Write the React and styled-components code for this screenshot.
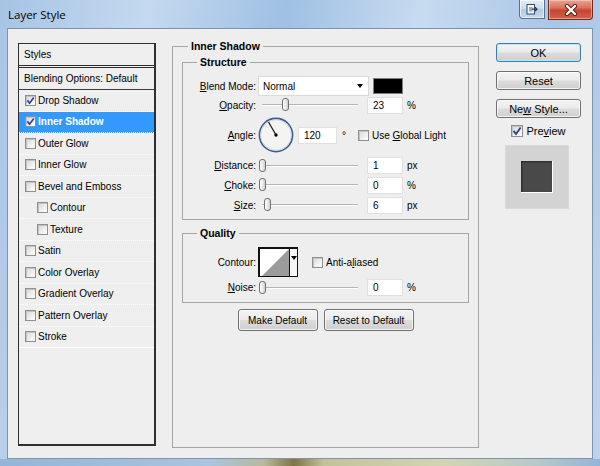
import React from 'react'
import styled, { createGlobalStyle } from 'styled-components'

const GlobalStyle = createGlobalStyle`
  html, body { margin: 0; padding: 0; }
  body {
    width: 600px;
    height: 466px;
    overflow: hidden;
    font-family: "Liberation Sans", Arial, sans-serif;
    font-size: 10px;
    color: #000;
  }
  * { box-sizing: border-box; }
`

const styleItems = [
  { name: 'Drop Shadow', on: true },
  { name: 'Inner Shadow', on: true, active: true },
  { name: 'Outer Glow' },
  { name: 'Inner Glow' },
  { name: 'Bevel and Emboss' },
  { name: 'Contour', sub: true },
  { name: 'Texture', sub: true },
  { name: 'Satin' },
  { name: 'Color Overlay' },
  { name: 'Gradient Overlay' },
  { name: 'Pattern Overlay' },
  { name: 'Stroke' },
]

function Check({ on, size = 11 }) {
  return (
    <CheckBox $size={size}>
      {on && (
        <svg width={size - 2} height={size - 2} viewBox="0 0 9 9">
          <path d="M1.4 4.4 L3.6 7.2 L7.8 1.4" fill="none" stroke="#2d4390" strokeWidth="1.7" />
        </svg>
      )}
    </CheckBox>
  )
}

function Slider({ frac }) {
  return (
    <SliderTrack>
      <Thumb style={{ left: 4 + frac * 96 - 3.5 }} />
    </SliderTrack>
  )
}

function Dial() {
  const a = (120 * Math.PI) / 180
  const x = 18 + Math.cos(a) * 15
  const y = 18 - Math.sin(a) * 15
  return (
    <svg width="36" height="36" viewBox="0 0 36 36">
      <circle cx="18" cy="18" r="16.6" fill="#f4f4f2" stroke="#3e5b8c" strokeWidth="1.6" />
      <circle cx="18" cy="18" r="15.3" fill="none" stroke="#c9d2df" strokeWidth="0.8" />
      <line x1="18" y1="18" x2={x} y2={y} stroke="#1e1e1e" strokeWidth="1.3" />
      <circle cx="18" cy="18" r="1.7" fill="#000" />
    </svg>
  )
}

function App() {
  return (
    <Window>
      <GlobalStyle />
      <TitleBar>
        <Title>Layer Style</Title>
        <CaptionButtons>
          <CaptionButton $w={26}>
            <svg width="12" height="11" viewBox="0 0 12 11">
              <rect x="1" y="0.5" width="7.5" height="9.5" fill="#f4f7fb" stroke="#3b4a5e" />
              <rect x="3" y="3" width="3.5" height="4.5" fill="#9aa9bb" />
              <path d="M6 5.2 H11 M9 3.2 L11 5.2 L9 7.2" fill="none" stroke="#2b3645" strokeWidth="1.2" />
            </svg>
          </CaptionButton>
          <CloseButton>
            <svg width="14" height="12" viewBox="0 0 14 12">
              <path d="M3 2 L11 10 M11 2 L3 10" stroke="#5a1c12" strokeWidth="4.2" strokeLinecap="round" />
              <path d="M3 2 L11 10 M11 2 L3 10" stroke="#ffffff" strokeWidth="2.4" strokeLinecap="round" />
            </svg>
          </CloseButton>
        </CaptionButtons>
      </TitleBar>

      <Client>
        <StyleList>
          <ListHead $h={24} $double>Styles</ListHead>
          <ListHead $h={22}>Blending Options: Default</ListHead>
          {styleItems.map((s) => (
            <StyleItem key={s.name} $sub={s.sub} $active={s.active}>
              <Check on={s.on} />
              <span>{s.name}</span>
            </StyleItem>
          ))}
        </StyleList>

        <MainGroup>
          <Legend $ml={6}>Inner Shadow</Legend>

          <SubGroup $pad="7px 0 4px 0">
            <Legend $ml={14}>Structure</Legend>
            <FieldRow $h={20}>
              <Label><u>B</u>lend Mode:</Label>
              <Select>
                <span>Normal</span>
                <Arrow />
              </Select>
              <Swatch />
            </FieldRow>
            <FieldRow $h={18}>
              <Label><u>O</u>pacity:</Label>
              <Slider frac={0.24} />
              <ValueBox>23</ValueBox>
              <Unit>%</Unit>
            </FieldRow>
            <FieldRow $h={42}>
              <Label><u>A</u>ngle:</Label>
              <Dial />
              <ValueBox $w={39} $ml={4}>120</ValueBox>
              <Unit $ml={5}>°</Unit>
              <CheckLabel $ml={12}>
                <Check />
                <span>Use <u>G</u>lobal Light</span>
              </CheckLabel>
            </FieldRow>
            <FieldRow $h={19}>
              <Label><u>D</u>istance:</Label>
              <Slider frac={0.01} />
              <ValueBox>1</ValueBox>
              <Unit>px</Unit>
            </FieldRow>
            <FieldRow $h={20}>
              <Label><u>C</u>hoke:</Label>
              <Slider frac={0.01} />
              <ValueBox>0</ValueBox>
              <Unit>%</Unit>
            </FieldRow>
            <FieldRow $h={20}>
              <Label><u>S</u>ize:</Label>
              <Slider frac={0.062} />
              <ValueBox>6</ValueBox>
              <Unit>px</Unit>
            </FieldRow>
          </SubGroup>

          <SubGroup $pad="7px 0 4px 0" $mt={6}>
            <Legend $ml={14}>Quality</Legend>
            <FieldRow $h={30}>
              <Label>Contour:</Label>
              <ContourPicker>
                <svg width="29" height="28" viewBox="0 0 29 28">
                  <rect width="29" height="28" fill="#ffffff" />
                  <polygon points="1,28 29,0 29,28" fill="#9b9b9b" />
                </svg>
                <ContourArrow>
                  <Arrow />
                </ContourArrow>
              </ContourPicker>
              <CheckLabel $ml={14}>
                <Check />
                <span>Anti-a<u>l</u>iased</span>
              </CheckLabel>
            </FieldRow>
            <FieldRow $h={21}>
              <Label><u>N</u>oise:</Label>
              <Slider frac={0.005} />
              <ValueBox>0</ValueBox>
              <Unit>%</Unit>
            </FieldRow>
          </SubGroup>

          <ButtonRow>
            <PushButton $w={80} $h={22}><span>Make Default</span></PushButton>
            <PushButton $w={90} $h={22}><span>Reset to Default</span></PushButton>
          </ButtonRow>
        </MainGroup>

        <SideColumn>
          <PushButton $w={85} $h={19} $default><span>OK</span></PushButton>
          <PushButton $w={85} $h={19} $mt={9}><span>Reset</span></PushButton>
          <PushButton $w={85} $h={19} $mt={9}><span>Ne<u>w</u> Style...</span></PushButton>
          <PreviewToggle>
            <Check on size={12} />
            <PreviewText>Pre<u>v</u>iew</PreviewText>
          </PreviewToggle>
          <PreviewBox>
            <PreviewSwatch />
          </PreviewBox>
        </SideColumn>
      </Client>
      <BottomEdge />
    </Window>
  )
}

export default App

const Window = styled.div`
  width: 600px;
  height: 466px;
  display: flex;
  flex-direction: column;
  background: linear-gradient(100deg, #a7c4e4 0%, #c4d9ef 22%, #9fc0e3 42%, #c7dbf0 62%, #a9c6e6 82%, #bdd4ed 100%);
`

const TitleBar = styled.div`
  height: 28px;
  flex: none;
  display: flex;
  align-items: flex-start;
  padding-left: 8px;
`

const Title = styled.div`
  flex: 1;
  font-family: "Open Sans", "Liberation Sans", sans-serif;
  font-size: 11.5px;
  line-height: 28px;
  padding-top: 1px;
  color: #000;
`

const CaptionButtons = styled.div`
  display: flex;
  gap: 3px;
  margin-right: 7px;
`

const CaptionButton = styled.div`
  width: ${(p) => p.$w}px;
  height: 19px;
  display: flex;
  align-items: center;
  justify-content: center;
  border: 1px solid #5b6f88;
  border-top: none;
  border-radius: 0 0 0 4px;
  background: linear-gradient(#e3ecf6 0%, #cfdeee 45%, #b4cbe3 55%, #c6d9ed 100%);
  box-shadow: inset 0 0 0 1px rgba(255, 255, 255, 0.6);
`

const CloseButton = styled.div`
  width: 45px;
  height: 20px;
  display: flex;
  align-items: center;
  justify-content: center;
  border: 1px solid #6e2a20;
  border-top: none;
  border-radius: 0 0 4px 0;
  background: linear-gradient(#e7a595 0%, #d8735f 40%, #c84630 55%, #d1624a 100%);
  box-shadow: inset 0 0 0 1px rgba(255, 220, 210, 0.5);
`

const Client = styled.div`
  margin: 0 7px;
  height: 431px;
  flex: none;
  background: #eeeeee;
  border: 1px solid #7f93ab;
  display: flex;
  align-items: flex-start;
  padding: 10px 0 0 10px;
`

const BottomEdge = styled.div`
  flex: 1;
  background: linear-gradient(90deg, #93b5d9 0%, #a9c4df 35%, #b9b99c 44%, #7f7444 49%, #c3c39a 54%, #d3d5b2 74%, #b5c8c9 90%, #93b5d9 100%);
`

const StyleList = styled.div`
  margin-top: 4px;
  width: 138px;
  height: 403px;
  flex: none;
  display: flex;
  flex-direction: column;
  background: #efefef;
  border: 1px solid #2f2f2f;
  border-right-width: 2px;
  border-bottom-width: 2px;
`

const ListHead = styled.div`
  height: ${(p) => p.$h}px;
  flex: none;
  display: flex;
  align-items: center;
  padding-left: 5px;
  white-space: nowrap;
  border-bottom: ${(p) => (p.$double ? '3px double #2f2f2f' : '1px solid #3a3a3a')};
`

const StyleItem = styled.div`
  height: 21.5px;
  flex: none;
  display: flex;
  align-items: center;
  gap: 2px;
  padding-left: ${(p) => (p.$sub ? 18 : 6)}px;
  white-space: nowrap;
  border-bottom: 1px dotted #ffffff;
  background: ${(p) => (p.$active ? '#3399ff' : 'transparent')};
  color: ${(p) => (p.$active ? '#ffffff' : '#000000')};
  font-weight: ${(p) => (p.$active ? 'bold' : 'normal')};

  &:last-child {
    border-bottom-style: solid;
  }
`

const CheckBox = styled.span`
  flex: none;
  width: ${(p) => p.$size}px;
  height: ${(p) => p.$size}px;
  display: inline-flex;
  align-items: center;
  justify-content: center;
  border: 1px solid #8f8f8f;
  background: linear-gradient(135deg, #d6d6d6 0%, #f2f2f2 65%, #ffffff 100%);
  box-shadow: inset 1px 1px 0 #c4c4c4;
`

const MainGroup = styled.fieldset`
  margin: 0 0 0 16px;
  min-width: 0;
  width: 307px;
  height: 409px;
  flex: none;
  padding: 0 9px;
  border: 1px solid #a5a5a5;
`

const SubGroup = styled.fieldset`
  margin: ${(p) => p.$mt || 2}px 0 0 0;
  min-width: 0;
  padding: ${(p) => p.$pad};
  border: 1px solid #a5a5a5;
`

const Legend = styled.legend`
  margin-left: ${(p) => p.$ml}px;
  padding: 0 3px;
  font-weight: bold;
  font-size: 10.5px;
  line-height: 14px;
`

const FieldRow = styled.div`
  height: ${(p) => p.$h}px;
  display: flex;
  align-items: center;
  white-space: nowrap;
`

const Label = styled.span`
  width: 73px;
  flex: none;
  margin-right: 2px;
  text-align: right;
`

const Select = styled.div`
  width: 111px;
  height: 20px;
  display: flex;
  align-items: center;
  justify-content: space-between;
  padding: 0 5px 0 4px;
  background: #ffffff;
  border: 1px solid #dadada;
`

const Arrow = styled.span`
  width: 0;
  height: 0;
  border-left: 3.5px solid transparent;
  border-right: 3.5px solid transparent;
  border-top: 4px solid #000;
`

const Swatch = styled.div`
  width: 30px;
  height: 16px;
  margin-left: 4px;
  background: #000000;
  border: 1px solid #808080;
`

const SliderTrack = styled.div`
  position: relative;
  width: 104px;
  height: 14px;
  flex: none;

  &::before {
    content: '';
    position: absolute;
    left: 4px;
    right: 4px;
    top: 6px;
    height: 1px;
    background: #b4b4b4;
    box-shadow: 0 1px 0 #ffffff;
  }
`

const Thumb = styled.span`
  position: absolute;
  top: 0;
  width: 7px;
  height: 13px;
  border: 1px solid #707070;
  border-radius: 3px;
  background: linear-gradient(90deg, #ffffff 0%, #e6e6e6 60%, #cfcfcf 100%);
`

const ValueBox = styled.div`
  width: ${(p) => p.$w || 36}px;
  height: 17px;
  flex: none;
  margin-left: ${(p) => (p.$ml === undefined ? 5 : p.$ml)}px;
  padding-left: 5px;
  display: flex;
  align-items: center;
  background: #ffffff;
  border: 1px solid #e0e0e0;
`

const Unit = styled.span`
  margin-left: ${(p) => p.$ml || 4}px;
`

const CheckLabel = styled.div`
  display: flex;
  align-items: center;
  gap: 3px;
  margin-left: ${(p) => p.$ml}px;
`

const ContourPicker = styled.div`
  width: 40px;
  height: 30px;
  flex: none;
  display: flex;
  border: 1px solid #111;
  border-top-width: 2px;
  border-left-width: 2px;
  overflow: hidden;
`

const ContourArrow = styled.div`
  flex: 1;
  display: flex;
  align-items: flex-start;
  justify-content: center;
  padding-top: 7px;
  background: #f6f6f6;
  border-left: 1px solid #111;
`

const ButtonRow = styled.div`
  display: flex;
  justify-content: center;
  gap: 6px;
  margin-top: 6px;
`

const PushButton = styled.div`
  width: ${(p) => p.$w}px;
  height: ${(p) => p.$h}px;
  flex: none;
  margin-top: ${(p) => p.$mt || 0}px;
  display: flex;
  align-items: center;
  justify-content: center;
  white-space: nowrap;
  font-size: ${(p) => (p.$w === 85 ? 11 : 10)}px;
  border: 1px solid ${(p) => (p.$default ? '#3c7fb1' : '#707070')};
  border-radius: 3px;
  background: linear-gradient(#f3f3f3 0%, #ebebeb 48%, #dcdcdc 52%, #cfcfcf 100%);
  box-shadow: inset 0 0 0 1px ${(p) => (p.$default ? '#bfe3f7' : 'rgba(255, 255, 255, 0.75)')};
`

const SideColumn = styled.div`
  width: 85px;
  margin: 4px 0 0 17px;
  display: flex;
  flex-direction: column;
  align-items: center;
`

const PreviewToggle = styled.div`
  height: 14px;
  margin-top: 6px;
  display: flex;
  align-items: center;
  gap: 3px;
`

const PreviewText = styled.span`
  font-size: 11px;
`

const PreviewBox = styled.div`
  width: 64px;
  height: 64px;
  margin-top: 7px;
  margin-right: 3px;
  display: flex;
  align-items: center;
  justify-content: center;
  background-color: #d3d3d3;
  background-image: radial-gradient(#e0e0e0 0.6px, transparent 0.7px);
  background-size: 2px 2px;
  border: 1px solid #dadada;
`

const PreviewSwatch = styled.div`
  width: 32px;
  height: 32px;
  background: #494949;
  border-right: 1px solid #ffffff;
  border-bottom: 1px solid #ffffff;
  box-shadow: inset 1px 1px 2px #262626;
`
